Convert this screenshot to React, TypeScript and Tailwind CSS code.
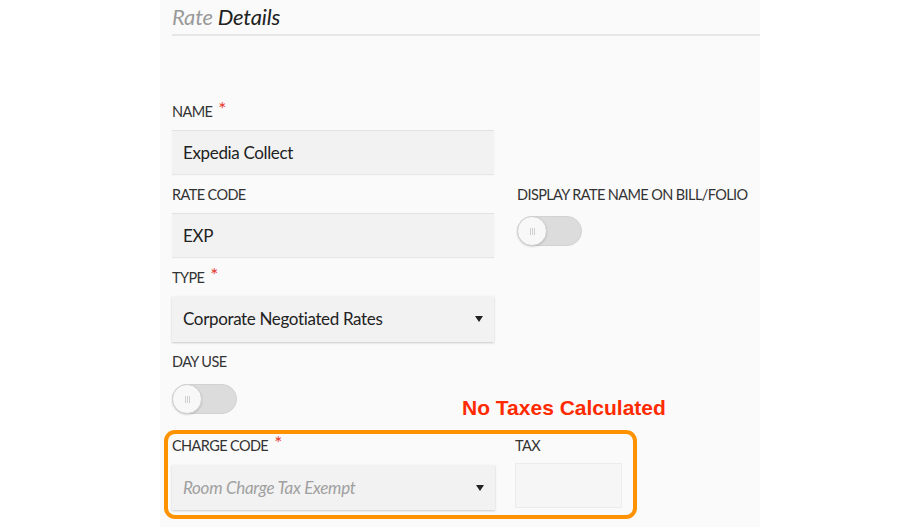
const font = "font-['Lato','Open_Sans',sans-serif]";

function Label({ children, required }: { children: React.ReactNode; required?: boolean }) {
  return (
    <div className="flex h-[20px] items-start text-[14.5px] leading-[20px] tracking-[-0.6px] text-[#333]">
      <span>{children}</span>
      {required ? <span className="ml-[6px] -mt-[3px] text-[19px] text-[#e8352c]">*</span> : null}
    </div>
  );
}

function Toggle() {
  return (
    <div className="relative h-[30px] w-[65px] rounded-full border border-[#d2d2d2] bg-[#dcdcdc]">
      <div className="absolute -left-px -top-px flex h-[30px] w-[30px] items-center justify-center gap-[1px] rounded-full border border-[#d0d0d0] bg-[#f8f8f8] shadow-[0_1px_2px_rgba(0,0,0,0.15)]">
        <span className="h-[7px] w-px bg-[#cfcfcf]" />
        <span className="h-[7px] w-px bg-[#cfcfcf]" />
        <span className="h-[7px] w-px bg-[#cfcfcf]" />
      </div>
    </div>
  );
}

function Caret() {
  return (
    <svg width="8" height="6" viewBox="0 0 8 6" className="shrink-0">
      <path d="M0 0 L8 0 L4 6 Z" fill="#222" />
    </svg>
  );
}

export default function App() {
  return (
    <div className={`${font} relative h-[527px] w-[920px] overflow-hidden bg-white`}>
      <div className="ml-[160px] h-full w-[600px] bg-[#fafafa] pl-[12px]">
        <div className="border-b-2 border-[#e6e6e6] pt-[3px] pb-[3px]">
          <h2 className="text-[22px] italic leading-[28px] tracking-[-0.2px]">
            <span className="text-[#9a9a9a]">Rate</span> <span className="text-[#222]">Details</span>
          </h2>
        </div>

        <div className="mt-[66px] flex gap-[23px]">
          <div className="w-[322px]">
            <Label required>NAME</Label>
            <div className="mt-[8px] flex h-[44px] items-center border-t border-[#e2e2e2] bg-[#f2f2f2] px-[11px] text-[17px] tracking-[-0.35px] text-[#222] shadow-[0_1px_1px_rgba(0,0,0,0.08)]">
              Expedia Collect
            </div>

            <div className="mt-[11px]">
              <Label>RATE CODE</Label>
            </div>
            <div className="mt-[8px] flex h-[44px] items-center border-t border-[#e2e2e2] bg-[#f2f2f2] px-[11px] text-[17px] tracking-[-0.35px] text-[#222] shadow-[0_1px_1px_rgba(0,0,0,0.08)]">
              EXP
            </div>

            <div className="mt-[11px]">
              <Label required>TYPE</Label>
            </div>
            <div className="mt-[8px] flex h-[46px] items-center justify-between bg-[#f2f2f2] pl-[11px] pr-[11px] text-[17px] tracking-[-0.35px] text-[#222] shadow-[0_1px_2px_rgba(0,0,0,0.2)]">
              <span>Corporate Negotiated Rates</span>
              <Caret />
            </div>

            <div className="mt-[10px]">
              <Label>DAY USE</Label>
            </div>
            <div className="mt-[12px]">
              <Toggle />
            </div>
          </div>

          <div className="pt-[83px]">
            <Label>DISPLAY RATE NAME ON BILL/FOLIO</Label>
            <div className="mt-[11px]">
              <Toggle />
            </div>
          </div>
        </div>

        <div className="mt-[22px] flex gap-[20px]">
          <div className="w-[323px]">
            <Label required>CHARGE CODE</Label>
            <div className="mt-[9px] flex h-[45px] items-center justify-between bg-[#f2f2f2] pl-[11px] pr-[11px] text-[17px] italic tracking-[-0.3px] text-[#a0a0a0] shadow-[0_1px_2px_rgba(0,0,0,0.2)]">
              <span>Room Charge Tax Exempt</span>
              <Caret />
            </div>
          </div>
          <div className="w-[107px]">
            <Label>TAX</Label>
            <div className="mt-[7px] h-[45px] border border-[#ececec] bg-[#f6f6f6]" />
          </div>
        </div>
      </div>

      <div className="absolute left-[462px] top-[395px] font-['Liberation_Sans',sans-serif] text-[21px] font-bold leading-[26px] text-[#ff2a00]">
        No Taxes Calculated
      </div>
      <div className="pointer-events-none absolute left-[164px] top-[430px] h-[89px] w-[473px] rounded-[11px] border-[4px] border-[#ff9200]" />
    </div>
  );
}
